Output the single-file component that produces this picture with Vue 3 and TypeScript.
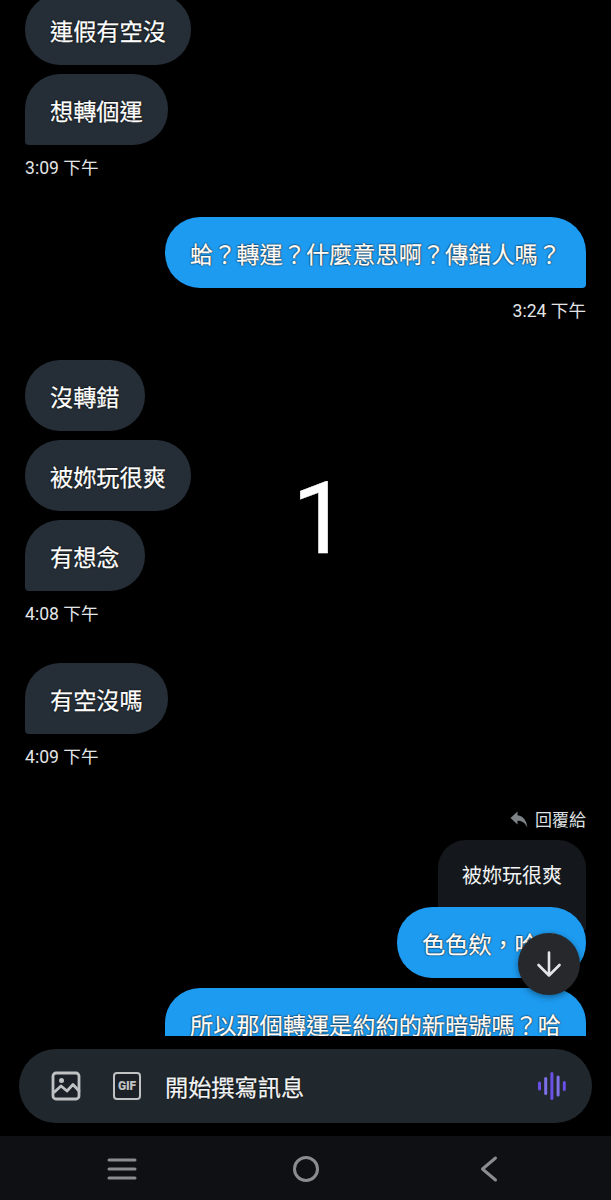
<template>
  <div class="screen">
    <div class="chat">
      <div v-for="(group, i) in groups" :key="i" class="group" :class="group.side">
        <div
          v-for="(msg, j) in group.messages"
          :key="j"
          class="bubble"
          :class="{ tail: j === group.messages.length - 1 }"
        >
          {{ msg }}
        </div>
        <div class="time">{{ group.time }}</div>
      </div>

      <div class="group right replies">
        <div class="reply-label">
          <svg width="18" height="17" viewBox="0 0 18 17">
            <path d="M7.5 0.5 0.5 7l7 6.5V9.8c4 0 7.4 1.6 9.8 6.7C16.9 9.8 13.4 4.9 7.5 4.2z" fill="#7d8287" />
          </svg>
          <span>回覆給</span>
        </div>
        <div class="quote">被妳玩很爽</div>
        <div class="bubble over">色色欸，哈哈</div>
        <div class="bubble wide">所以那個轉運是約約的新暗號嗎？哈</div>
      </div>

      <div class="big-one">1</div>
      <button class="fab" aria-label="scroll down">
        <svg width="30" height="30" viewBox="0 0 30 30" fill="none" stroke="#e4e5e6" stroke-width="2.6" stroke-linecap="round" stroke-linejoin="round">
          <path d="M15 3.5v23M4.5 16 15 26.5 25.5 16" />
        </svg>
      </button>
    </div>

    <div class="composer">
      <svg class="tool" width="30" height="30" viewBox="0 0 30 30" fill="#1b2126" stroke="#bfc1c3" stroke-width="2.8" stroke-linejoin="round">
        <rect x="2" y="2" width="26" height="26" rx="3" />
        <circle cx="10.5" cy="9.5" r="2.5" fill="#bfc1c3" stroke="none" />
        <path d="M3.5 21l6.5-6 6 5 6-6.5 6 6.5" fill="none" stroke-linecap="round" />
      </svg>
      <div class="gif">GIF</div>
      <span class="placeholder">開始撰寫訊息</span>
      <svg class="voice" width="30" height="30" viewBox="0 0 30 30" stroke-width="3" stroke-linecap="round">
        <path d="M2.5 12v6" stroke="#6a4fe6" />
        <path d="M8.7 7.5v15" stroke="#7f70e8" />
        <path d="M14.9 2.5v25" stroke="#6a4fe6" />
        <path d="M21.1 6v18" stroke="#7f70e8" />
        <path d="M27.3 11.5v7" stroke="#6a4fe6" />
      </svg>
    </div>

    <div class="navbar">
      <svg width="30" height="24" viewBox="0 0 30 24" fill="none" stroke="#8b8c8e" stroke-width="3" stroke-linecap="round">
        <path d="M2 3h26M2 12h26M2 21h26" />
      </svg>
      <svg width="28" height="28" viewBox="0 0 28 28" fill="none" stroke="#8b8c8e" stroke-width="3">
        <circle cx="14" cy="14" r="11.5" />
      </svg>
      <svg width="24" height="28" viewBox="0 0 24 28" fill="none" stroke="#8b8c8e" stroke-width="3" stroke-linecap="round" stroke-linejoin="round">
        <path d="M20.5 3 7.5 14l13 11" />
      </svg>
    </div>
  </div>
</template>

<script setup lang="ts">
interface Group {
  side: 'left' | 'right'
  messages: string[]
  time: string
}

const groups: Group[] = [
  { side: 'left', messages: ['連假有空沒', '想轉個運'], time: '3:09 下午' },
  { side: 'right', messages: ['蛤？轉運？什麼意思啊？傳錯人嗎？'], time: '3:24 下午' },
  { side: 'left', messages: ['沒轉錯', '被妳玩很爽', '有想念'], time: '4:08 下午' },
  { side: 'left', messages: ['有空沒嗎'], time: '4:09 下午' },
]
</script>

<style>
body {
  background: #000;
}
</style>

<style scoped>
.screen {
  width: 611px;
  height: 1200px;
  display: flex;
  flex-direction: column;
  background: #000;
  overflow: hidden;
  font-family: "Noto Sans CJK TC", "Noto Sans", sans-serif;
  color: #fff;
}

.chat {
  position: relative;
  height: 1036px;
  flex: none;
  overflow: hidden;
  padding: 0 25px;
  box-sizing: border-box;
}

.group {
  display: flex;
  flex-direction: column;
  gap: 9px;
  margin-bottom: 37px;
}

.group:first-child {
  margin-top: -6px;
}

.group.left {
  align-items: flex-start;
}

.group.right {
  align-items: flex-end;
}

.bubble {
  height: 71px;
  box-sizing: border-box;
  padding: 0 25px;
  display: flex;
  align-items: center;
  border-radius: 35px;
  font-size: 23.2px;
  line-height: 32px;
  white-space: nowrap;
  text-shadow: 0 0 1px #000, 0 0 2px #000;
  -webkit-text-stroke: 0.25px #fff;
}

.left .bubble {
  background: #252e36;
}

.right .bubble {
  background: #1d9bf0;
}

.left .bubble.tail {
  border-bottom-left-radius: 4px;
}

.right .bubble.tail {
  border-bottom-right-radius: 4px;
}

.time {
  font-family: Roboto, "Noto Sans CJK TC", sans-serif;
  font-size: 17.6px;
  line-height: 24px;
  color: #e3e5e7;
  margin-top: 2px;
}

.replies {
  gap: 0;
  margin-top: 38px;
  margin-bottom: 0;
}

.reply-label {
  display: flex;
  align-items: center;
  gap: 7px;
  font-size: 17px;
  line-height: 24px;
  color: #dfe1e3;
  margin-bottom: 9px;
}

.quote {
  width: 148px;
  height: 90px;
  box-sizing: border-box;
  padding: 20px 0 0 24px;
  border-radius: 28px 28px 0 0;
  background: #14181c;
  font-size: 20px;
  line-height: 30px;
  color: #f1f2f3;
}

.bubble.over {
  margin-top: -23px;
  border-radius: 35px;
}

.bubble.wide {
  margin-top: 10px;
  width: 421px;
  height: 105px;
  padding: 20px 25px;
  white-space: normal;
  align-items: flex-start;
}

.big-one {
  position: absolute;
  left: 292px;
  top: 463px;
  font-family: Roboto, sans-serif;
  font-weight: 400;
  font-size: 100px;
  line-height: 112px;
  -webkit-text-stroke: 0.5px #fff;
}

.fab {
  position: absolute;
  left: 518px;
  top: 933px;
  width: 62px;
  height: 62px;
  padding: 0;
  border: 0;
  border-radius: 50%;
  background: #26282c;
  display: flex;
  align-items: center;
  justify-content: center;
  box-shadow: 0 2px 6px rgba(0, 0, 0, 0.4);
}

.composer {
  height: 74px;
  margin: 13px 19px 13px;
  padding: 0 25px 0 32px;
  flex: none;
  display: flex;
  align-items: center;
  border-radius: 37px;
  background: #20282e;
}

.tool {
  flex: none;
}

.gif {
  flex: none;
  width: 28px;
  height: 28px;
  margin-left: 32px;
  box-sizing: border-box;
  border: 2.8px solid #bfc1c3;
  border-radius: 4px;
  background: #1b2126;
  display: flex;
  align-items: center;
  justify-content: center;
  font-family: Roboto, sans-serif;
  font-weight: 900;
  font-size: 12px;
  letter-spacing: -0.2px;
  color: #bfc1c3;
}

.placeholder {
  margin-left: 24px;
  font-size: 23.2px;
  color: #f2f3f4;
  text-shadow: 0 0 1px #000, 0 0 2px #000;
  -webkit-text-stroke: 0.25px #f2f3f4;
}

.voice {
  margin-left: auto;
}

.navbar {
  flex: 1;
  display: flex;
  align-items: center;
  gap: 155px;
  padding: 1px 0 0 107px;
  background: #0e1014;
}
</style>
